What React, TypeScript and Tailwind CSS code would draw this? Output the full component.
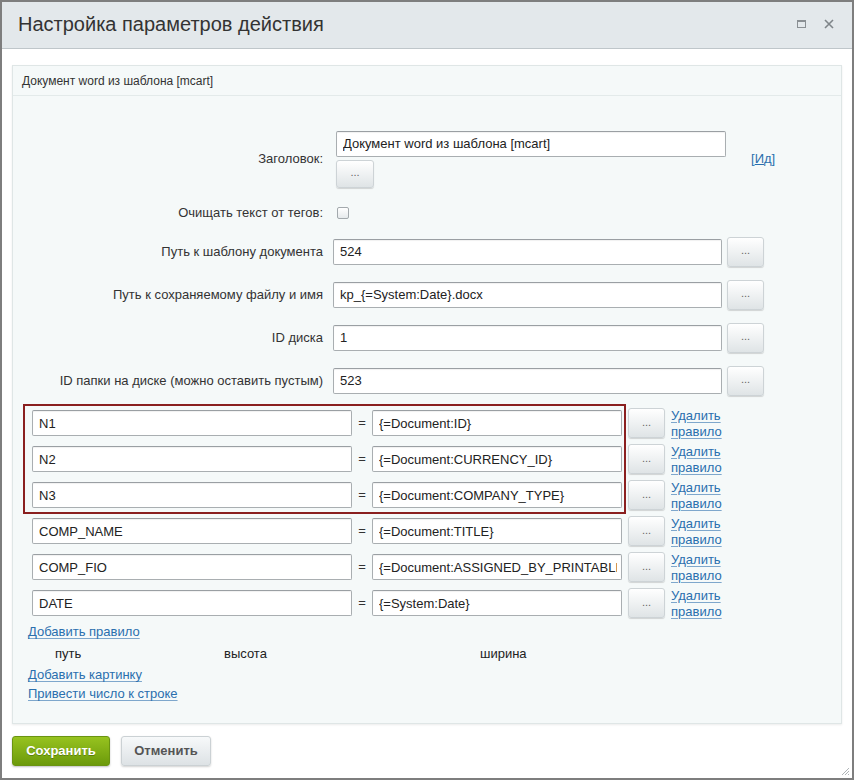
import React from "react";

const FONT = "font-['Liberation_Sans',Arial,sans-serif]";

const fields = [
  { label: "Путь к шаблону документа", value: "524" },
  { label: "Путь к сохраняемому файлу и имя", value: "kp_{=System:Date}.docx" },
  { label: "ID диска", value: "1" },
  { label: "ID папки на диске (можно оставить пустым)", value: "523" },
];

const rules = [
  { name: "N1", value: "{=Document:ID}" },
  { name: "N2", value: "{=Document:CURRENCY_ID}" },
  { name: "N3", value: "{=Document:COMPANY_TYPE}" },
  { name: "COMP_NAME", value: "{=Document:TITLE}" },
  { name: "COMP_FIO", value: "{=Document:ASSIGNED_BY_PRINTABLE}" },
  { name: "DATE", value: "{=System:Date}" },
];

// text input in bitrix style
const TextInput = ({ value, className }: { value: string; className: string }) => (
  <input
    readOnly
    value={value}
    className={`h-[26px] bg-white border border-[#a9aeb1] border-t-[#9a9fa3] rounded-[2px] pl-[6px] pr-[4px] text-[13px] text-[#222] outline-none shadow-[inset_0_1px_1px_rgba(0,0,0,0.06)] ${className}`}
  />
);

const DotsButton = ({ className = "" }: { className?: string }) => (
  <div
    className={`flex items-center justify-center rounded-[3px] border border-[#cdd3d6] bg-gradient-to-b from-[#ffffff] to-[#dfe4e6] shadow-[0_1px_1px_rgba(0,0,0,0.15)] text-[11px] leading-none text-[#666] pb-[2px] ${className}`}
  >
    ...
  </div>
);

const Link = ({ children, className = "" }: { children: React.ReactNode; className?: string }) => (
  <a className={`text-[13px] text-[#2a6fae] underline decoration-[#7ea7cc] underline-offset-2 cursor-pointer ${className}`}>
    {children}
  </a>
);

export default function App() {
  return (
    <div
      className={`${FONT} w-[854px] h-[780px] border-2 border-[#7e7e7e] bg-white flex flex-col relative`}
    >
      {/* Title bar */}
      <div className="h-[47px] shrink-0 bg-[#e3e8eb] border-b border-[#bfc6ca] flex items-center pl-[16px] pr-[18px]">
        <div className="text-[20px] text-[#333] flex-1 pb-[3px]">
          Настройка параметров действия
        </div>
        <div className="flex items-center gap-[18px] pb-[2px]">
          <div className="w-[9px] h-[8px] border border-[#8a8f93] border-t-2" />
          <svg width="10" height="10" viewBox="0 0 10 10">
            <path d="M1 1 L9 9 M9 1 L1 9" stroke="#7f8589" strokeWidth="1.6" />
          </svg>
        </div>
      </div>

      {/* Panel */}
      <div className="mt-[16px] mx-[10px] border border-[#dfe6e6] bg-[#f5f9f9] shadow-[0_1px_2px_rgba(0,0,0,0.08)]">
        <div className="h-[30px] flex items-center pl-[9px] text-[12px] text-[#333] border-b border-[#e3eaea]">
          Документ word из шаблона [mcart]
        </div>

        <div className="pt-[31px] pb-[18px]">
          {/* Заголовок */}
          <div className="h-[64px] flex items-center">
            <div className="w-[310px] text-right text-[13px] text-[#333]">Заголовок:</div>
            <div className="ml-[13px] flex flex-col gap-[3px]">
              <TextInput value="Документ word из шаблона [mcart]" className="w-[390px]" />
              <DotsButton className="w-[38px] h-[28px]" />
            </div>
            <div className="ml-[25px] text-[13px] text-[#2a6fae]">
              [<span className="underline">И</span>д]
            </div>
          </div>

          {/* Очищать текст */}
          <div className="h-[39px] pt-[5px] flex items-center">
            <div className="w-[310px] text-right text-[13px] text-[#333]">Очищать текст от тегов:</div>
            <div className="ml-[14px] w-[12px] h-[12px] rounded-[2px] border border-[#a3a9ad] bg-gradient-to-b from-[#ffffff] to-[#e6eaec]" />
          </div>

          {fields.map((f) => (
            <div key={f.label} className="h-[43px] flex items-center">
              <div className="w-[310px] text-right text-[13px] text-[#333]">{f.label}</div>
              <TextInput value={f.value} className="ml-[10px] w-[389px]" />
              <DotsButton className="ml-[5px] w-[37px] h-[30px]" />
            </div>
          ))}

          {/* Rules */}
          <div className="relative mt-[3px]">
            {rules.map((r) => (
              <div key={r.name} className="h-[36px] flex items-center">
                <TextInput value={r.name} className="ml-[19px] w-[320px]" />
                <div className="w-[20px] text-center text-[13px] text-[#333]">=</div>
                <TextInput value={r.value} className="w-[250px]" />
                <DotsButton className="ml-[6px] w-[37px] h-[30px]" />
                <div className="ml-[6px] mt-[2px] flex flex-col leading-[16px]">
                  <Link>Удалить</Link>
                  <Link>правило</Link>
                </div>
              </div>
            ))}
            <div className="absolute left-[10px] top-[-1px] w-[603px] h-[110px] border-2 border-[#8a1f1f] pointer-events-none" />
          </div>

          <div className="mt-[2px] h-[18px] flex items-center pl-[15px]">
            <Link>Добавить правило</Link>
          </div>
          <div className="h-[26px] flex items-center pl-[42px] text-[13px] text-[#222]">
            <div className="w-[169px]">путь</div>
            <div className="w-[256px]">высота</div>
            <div>ширина</div>
          </div>
          <div className="h-[16px] flex items-center pl-[15px]">
            <Link>Добавить картинку</Link>
          </div>
          <div className="h-[22px] flex items-center pl-[15px]">
            <Link>Привести число к строке</Link>
          </div>
        </div>
      </div>

      {/* Footer buttons */}
      <div className="mt-[12px] ml-[10px] flex gap-[11px]">
        <div className="w-[98px] h-[30px] rounded-[3px] bg-gradient-to-b from-[#97c31f] to-[#6c9a0a] border border-[#6a9411] shadow-[0_1px_2px_rgba(0,0,0,0.25)] flex items-center justify-center text-[13px] font-bold text-white [text-shadow:0_1px_0_rgba(0,0,0,0.25)]">
          Сохранить
        </div>
        <div className="w-[90px] h-[30px] rounded-[3px] bg-gradient-to-b from-[#f7f9fa] to-[#dde2e5] border border-[#cbd1d4] shadow-[0_1px_2px_rgba(0,0,0,0.18)] flex items-center justify-center text-[13px] font-bold text-[#555]">
          Отменить
        </div>
      </div>

      {/* resize grip */}
      <svg className="absolute right-[2px] bottom-[2px]" width="10" height="10" viewBox="0 0 10 10">
        <path d="M9 2 L2 9 M9 5 L5 9 M9 8 L8 9" stroke="#b0b5b8" strokeWidth="1" />
      </svg>
    </div>
  );
}
